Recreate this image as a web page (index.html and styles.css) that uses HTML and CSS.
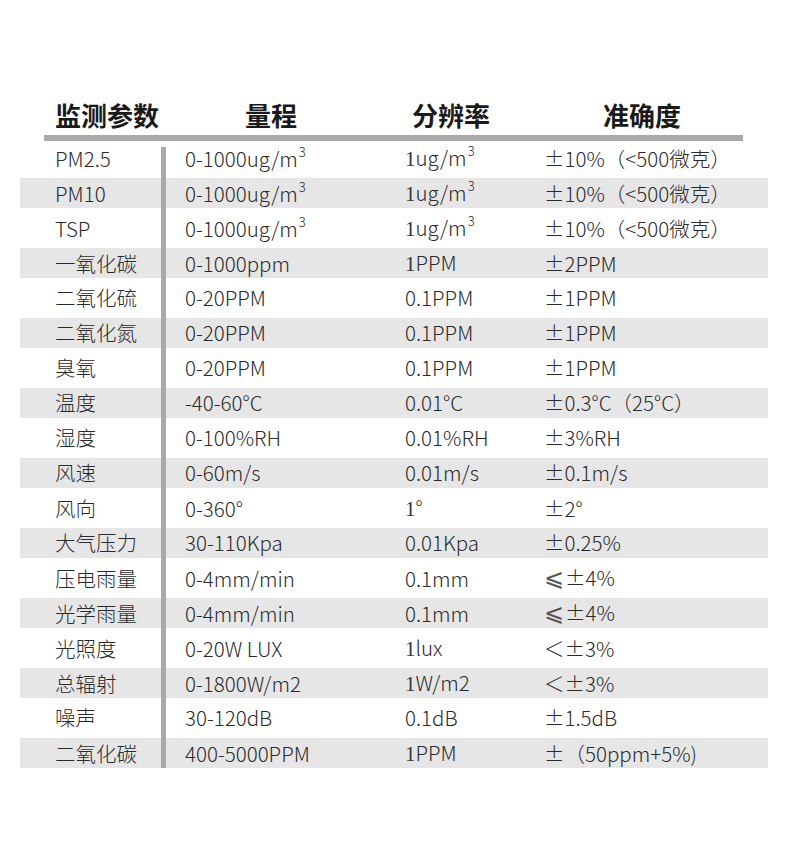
FILE: index.html
```html
<!DOCTYPE html>
<html lang="zh-CN">
<head>
<meta charset="utf-8">
<title>参数表</title>
<link rel="stylesheet" href="styles.css">
</head>
<body>
<div class="sheet">
  <div class="head">
    <div>监测参数</div>
    <div>量程</div>
    <div>分辨率</div>
    <div>准确度</div>
  </div>
  <div class="rows">
    <div class="row"><div>PM2.5</div><div>0-1000ug/m<sup>3</sup></div><div><span class="one">1</span>ug/m<sup>3</sup></div><div>±10%（&lt;500微克）</div></div>
    <div class="row alt"><div>PM10</div><div>0-1000ug/m<sup>3</sup></div><div><span class="one">1</span>ug/m<sup>3</sup></div><div>±10%（&lt;500微克）</div></div>
    <div class="row"><div>TSP</div><div>0-1000ug/m<sup>3</sup></div><div><span class="one">1</span>ug/m<sup>3</sup></div><div>±10%（&lt;500微克）</div></div>
    <div class="row alt"><div>一氧化碳</div><div>0-1000ppm</div><div><span class="one">1</span>PPM</div><div>±2PPM</div></div>
    <div class="row"><div>二氧化硫</div><div>0-20PPM</div><div>0.1PPM</div><div>±1PPM</div></div>
    <div class="row alt"><div>二氧化氮</div><div>0-20PPM</div><div>0.1PPM</div><div>±1PPM</div></div>
    <div class="row"><div>臭氧</div><div>0-20PPM</div><div>0.1PPM</div><div>±1PPM</div></div>
    <div class="row alt"><div>温度</div><div>-40-60°C</div><div>0.01°C</div><div>±0.3°C（25°C）</div></div>
    <div class="row"><div>湿度</div><div>0-100%RH</div><div>0.01%RH</div><div>±3%RH</div></div>
    <div class="row alt"><div>风速</div><div>0-60m/s</div><div>0.01m/s</div><div>±0.1m/s</div></div>
    <div class="row"><div>风向</div><div>0-360°</div><div><span class="one">1</span>°</div><div>±2°</div></div>
    <div class="row alt"><div>大气压力</div><div>30-110Kpa</div><div>0.01Kpa</div><div>±0.25%</div></div>
    <div class="row"><div>压电雨量</div><div>0-4mm/min</div><div>0.1mm</div><div><span class="le">⩽</span>±4%</div></div>
    <div class="row alt"><div>光学雨量</div><div>0-4mm/min</div><div>0.1mm</div><div><span class="le">⩽</span>±4%</div></div>
    <div class="row"><div>光照度</div><div>0-20W LUX</div><div><span class="one">1</span>lux</div><div>＜±3%</div></div>
    <div class="row alt"><div>总辐射</div><div>0-1800W/m2</div><div><span class="one">1</span>W/m2</div><div>＜±3%</div></div>
    <div class="row"><div>噪声</div><div>30-120dB</div><div>0.1dB</div><div>±1.5dB</div></div>
    <div class="row alt"><div>二氧化碳</div><div>400-5000PPM</div><div><span class="one">1</span>PPM</div><div>±（50ppm+5%)</div></div>
  </div>
</div>
</body>
</html>
```
FILE: styles.css
```css
html, body {
  margin: 0;
  padding: 0;
  background: #ffffff;
}
body {
  font-family: "Noto Sans CJK SC", "Noto Sans", sans-serif;
  color: #2a2a2a;
}
.sheet {
  padding-top: 95px;
}
.head {
  margin-left: 44px;
  width: 699px;
  box-sizing: border-box;
  padding-left: 11px;
  display: grid;
  grid-template-columns: 190px 167px 191px 1fr;
  font-size: 26px;
  font-weight: 700;
  line-height: 40px;
  color: #1a1a1a;
  border-bottom: 6px solid #a9a9a9;
}
.rows {
  position: relative;
  margin-top: 2px;
  margin-left: 20px;
  width: 748px;
  display: flex;
  flex-direction: column;
  gap: 5px;
}
.rows::before {
  content: "";
  position: absolute;
  left: 141px;
  top: 4px;
  bottom: 0;
  width: 5px;
  background: #a9a9a9;
}
.row {
  height: 30px;
  box-sizing: border-box;
  padding-left: 35px;
  padding-bottom: 2px;
  display: grid;
  grid-template-columns: 130px 220px 139px 1fr;
  align-items: center;
  font-size: 20.5px;
  font-weight: 300;
  line-height: 28px;
  white-space: nowrap;
}
.row.alt {
  background: #e6e6e6;
}
.row sup {
  font-size: 13px;
  line-height: 0;
  vertical-align: 10px;
  margin-left: 1px;
}
.one {
  font-family: "Liberation Serif", serif;
  font-size: 21px;
  font-weight: 400;
  color: #333;
}
.le {
  font-family: "DejaVu Sans", sans-serif;
  font-size: 24px;
  color: #555;
  margin-right: 1px;
}
```
